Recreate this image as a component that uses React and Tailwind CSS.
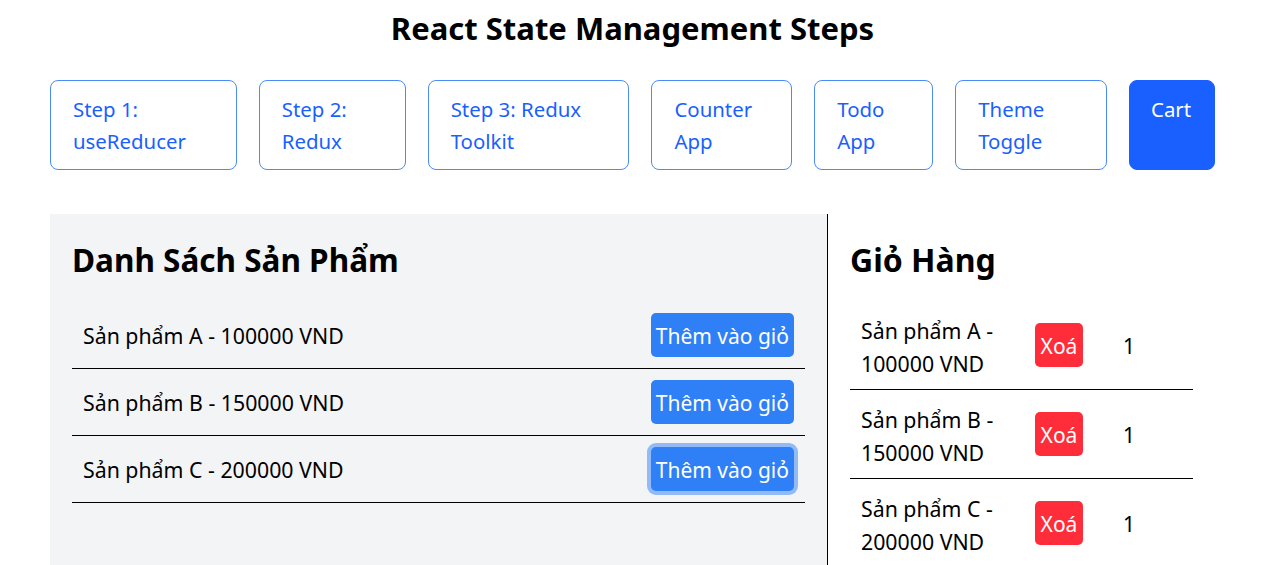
import React from "react";

const steps = [
  { label: "Step 1: useReducer", w: "w-[187px]" },
  { label: "Step 2: Redux", w: "w-[147px]" },
  { label: "Step 3: Redux Toolkit", w: "w-[202px]" },
  { label: "Counter App", w: "w-[141px]" },
  { label: "Todo App", w: "w-[119px]" },
  { label: "Theme Toggle", w: "w-[152px]" },
];

const products = [
  { name: "Sản phẩm A", price: 100000 },
  { name: "Sản phẩm B", price: 150000 },
  { name: "Sản phẩm C", price: 200000 },
];

export default function App() {
  return (
    <div
      className="min-h-[565px] bg-white text-black overflow-hidden"
      style={{ fontFamily: '"Noto Sans", "Open Sans", sans-serif' }}
    >
      <h1 className="pt-[9px] text-center text-[31px] leading-[38px] font-bold">
        React State Management Steps
      </h1>

      <div className="mt-[33px] flex gap-[22px] px-[50px]">
        {steps.map((s) => (
          <button
            key={s.label}
            className={`${s.w} h-[90px] rounded-[8px] border border-[#4a8cf7] bg-white px-[22px] py-[12px] text-left text-[20.4px] leading-[32px] text-[#1a5fff]`}
          >
            {s.label}
          </button>
        ))}
        <button className="flex w-[86px] h-[90px] items-start rounded-[8px] border border-[#1a5fff] bg-[#1a5fff] px-[21px] py-[12px] text-left text-[20.4px] leading-[32px] text-white">
          Cart
        </button>
      </div>

      <div className="mt-[44px] flex pl-[50px]">
        <div className="w-[778px] shrink-0 border-r border-black bg-[#f3f4f6] p-[22px]">
          <h2 className="mt-[5px] text-[31.5px] leading-[38px] font-bold">Danh Sách Sản Phẩm</h2>
          <div className="mt-[23px]">
            {products.map((p, i) => (
              <div
                key={p.name}
                className="flex items-center justify-between border-b border-black p-[11px]"
              >
                <span className="pt-[2px] text-[21.3px] leading-[30px]">
                  {p.name} - {p.price} VND
                </span>
                <button
                  className={`h-[44px] rounded-[5px] bg-[#2f7ff7] px-[5px] pt-[2px] text-[21px] leading-[30px] text-white ${
                    i === 2 ? "ring-4 ring-[#2f7ff7]/50" : ""
                  }`}
                >
                  Thêm vào giỏ
                </button>
              </div>
            ))}
          </div>
        </div>

        <div className="flex-1 p-[22px]">
          <h2 className="mt-[5px] text-[32px] leading-[38px] font-bold">Giỏ Hàng</h2>
          <div className="mt-[22px] w-[343px]">
            {products.map((p) => (
              <div key={p.name} className="flex items-center border-b border-black">
                <div className="w-[174px] shrink-0 px-[11px] pt-[13px] pb-[9px] text-[21.3px] leading-[33px]">
                  {p.name} - {p.price} VND
                </div>
                <div className="w-[70px] shrink-0 px-[11px]">
                  <button className="h-[44px] w-[48px] rounded-[5px] bg-[#ff2d3a] pt-[2px] text-[21px] leading-[30px] text-white">
                    Xoá
                  </button>
                </div>
                <div className="flex-1 pl-[29px] pt-[2px] text-[21px] leading-[33px]">1</div>
              </div>
            ))}
          </div>
        </div>
      </div>
    </div>
  );
}
